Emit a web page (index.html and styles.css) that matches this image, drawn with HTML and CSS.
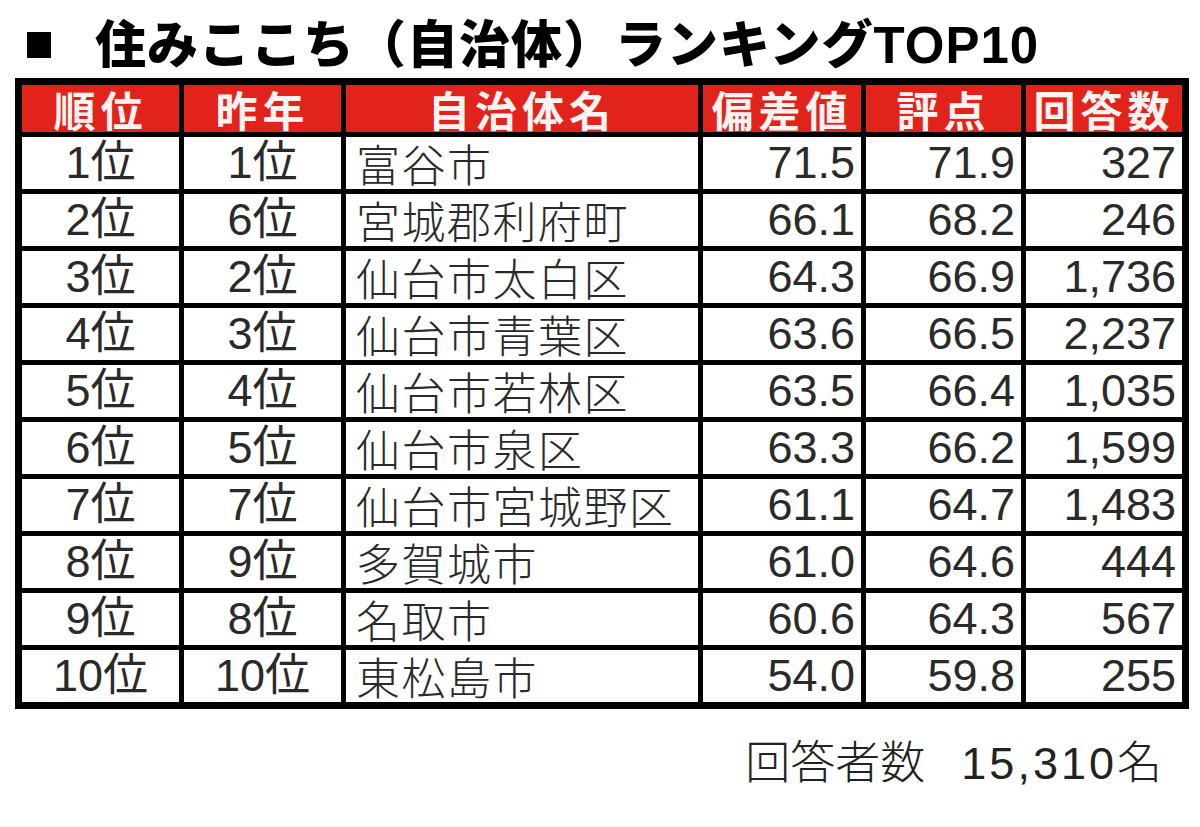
FILE: index.html
```html
<!DOCTYPE html>
<html lang="ja">
<head>
<meta charset="utf-8">
<title>住みここち（自治体）ランキングTOP10</title>
<link rel="stylesheet" href="styles.css">
</head>
<body>
<div class="page">
  <h1 class="title"><span class="sq"></span><span class="title-text">住みここち（自治体）ランキング<span class="latin">TOP10</span></span></h1>
  <table class="rank">
    <colgroup>
      <col class="c1"><col class="c2"><col class="c3"><col class="c4"><col class="c5"><col class="c6">
    </colgroup>
    <thead>
      <tr><th>順位</th><th>昨年</th><th>自治体名</th><th>偏差値</th><th>評点</th><th>回答数</th></tr>
    </thead>
    <tbody>
      <tr><td class="ctr">1位</td><td class="ctr">1位</td><td class="name">富谷市</td><td class="num">71.5</td><td class="num">71.9</td><td class="num">327</td></tr>
      <tr><td class="ctr">2位</td><td class="ctr">6位</td><td class="name">宮城郡利府町</td><td class="num">66.1</td><td class="num">68.2</td><td class="num">246</td></tr>
      <tr><td class="ctr">3位</td><td class="ctr">2位</td><td class="name">仙台市太白区</td><td class="num">64.3</td><td class="num">66.9</td><td class="num">1,736</td></tr>
      <tr><td class="ctr">4位</td><td class="ctr">3位</td><td class="name">仙台市青葉区</td><td class="num">63.6</td><td class="num">66.5</td><td class="num">2,237</td></tr>
      <tr><td class="ctr">5位</td><td class="ctr">4位</td><td class="name">仙台市若林区</td><td class="num">63.5</td><td class="num">66.4</td><td class="num">1,035</td></tr>
      <tr><td class="ctr">6位</td><td class="ctr">5位</td><td class="name">仙台市泉区</td><td class="num">63.3</td><td class="num">66.2</td><td class="num">1,599</td></tr>
      <tr><td class="ctr">7位</td><td class="ctr">7位</td><td class="name">仙台市宮城野区</td><td class="num">61.1</td><td class="num">64.7</td><td class="num">1,483</td></tr>
      <tr><td class="ctr">8位</td><td class="ctr">9位</td><td class="name">多賀城市</td><td class="num">61.0</td><td class="num">64.6</td><td class="num">444</td></tr>
      <tr><td class="ctr">9位</td><td class="ctr">8位</td><td class="name">名取市</td><td class="num">60.6</td><td class="num">64.3</td><td class="num">567</td></tr>
      <tr><td class="ctr">10位</td><td class="ctr">10位</td><td class="name">東松島市</td><td class="num">54.0</td><td class="num">59.8</td><td class="num">255</td></tr>
    </tbody>
  </table>
  <p class="total">回答者数<span class="total-num">15,310</span>名</p>
</div>
</body>
</html>
```

FILE: styles.css
```css
html, body {
  margin: 0;
  padding: 0;
  background: #ffffff;
}

.page {
  width: 1167px;
  padding: 8px 0 0 15px;
  font-family: "Liberation Sans", "Noto Sans CJK JP", sans-serif;
  color: #1e1e1e;
}

.title {
  margin: 0;
  height: 70px;
  display: flex;
  align-items: center;
  font-family: "Noto Sans CJK JP", sans-serif;
  font-weight: 900;
  font-size: 51px;
  line-height: 1;
  color: #000;
  letter-spacing: 1px;
}

.sq {
  display: inline-block;
  width: 24px;
  height: 26px;
  background: #000;
  margin: 4px 0 0 12px;
  flex: none;
}

.title-text {
  margin-left: 44px;
}

.latin {
  font-family: "Liberation Sans", sans-serif;
  font-weight: 700;
  letter-spacing: 1px;
}

.rank {
  border-collapse: collapse;
  table-layout: fixed;
  width: 1167px;
  border: 7px solid #000;
}

.c1 { width: 163px; }
.c2 { width: 162px; }
.c3 { width: 357px; }
.c4 { width: 163px; }
.c5 { width: 160px; }
.c6 { width: 162px; }

.rank th,
.rank td {
  border: 5px solid #000;
  padding: 0;
  white-space: nowrap;
}

.rank th {
  height: 47px;
  background: #e2231c;
  color: #fff3f2;
  font-family: "Noto Sans CJK JP", sans-serif;
  font-weight: 700;
  font-size: 42px;
  line-height: 47px;
  letter-spacing: 5px;
  text-align: center;
}

.rank td {
  height: 52px;
  font-size: 45px;
  line-height: 52px;
  font-weight: 400;
  color: #2a2a2a;
}

.ctr {
  text-align: center;
}

.name {
  text-align: left;
  padding-left: 10px !important;
  letter-spacing: 1.5px;
  font-family: "Noto Sans CJK JP", sans-serif;
  font-weight: 300 !important;
  font-size: 44px !important;
}

.num {
  text-align: right;
  padding-right: 6px !important;
}

.total {
  margin: 28px 0 0;
  text-align: right;
  padding-right: 20px;
  font-family: "Noto Sans CJK JP", sans-serif;
  font-weight: 300;
  font-size: 45px;
  line-height: 1;
  color: #222;
}

.total-num {
  font-family: "Liberation Sans", sans-serif;
  letter-spacing: 3px;
  margin-left: 36px;
}
```
